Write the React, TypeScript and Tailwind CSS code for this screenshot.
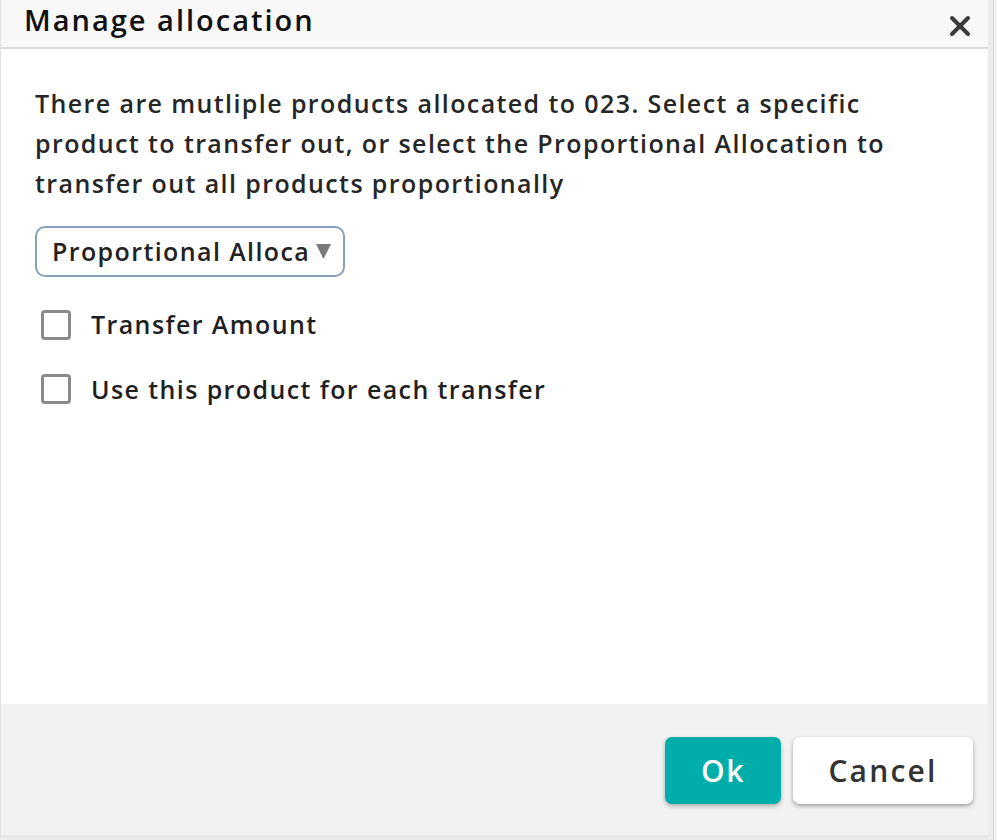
import React from "react";

export default function App() {
  const font = { fontFamily: '"Open Sans", "Noto Sans", sans-serif' };
  return (
    <div className="w-[997px] h-[840px] flex bg-[#ececec]" style={font}>
      <div className="w-[988px] h-[838px] flex flex-col border-l border-[#e2e2e2] bg-white">
        <div className="h-[49px] shrink-0 flex items-center justify-between bg-[#f8f8f8] border-b-2 border-[#dcdcdc] pl-[23px] pr-[16px]">
          <div className="text-[29px] font-semibold text-[#111] leading-none -mt-[8px] tracking-[2px]">Manage allocation</div>
          <svg width="24" height="24" viewBox="0 0 24 24" className="mt-[4px]">
            <path d="M4 4 L20 20 M20 4 L4 20" stroke="#3a3a3a" strokeWidth="4" strokeLinecap="round" />
          </svg>
        </div>
        <div className="flex-1 flex flex-col pl-[34px] pt-[34px]">
          <p className="text-[25px] font-[550] leading-[40px] text-[#262626] tracking-[1.4px] whitespace-nowrap">
            There are mutliple products allocated to 023. Select a specific
            <br />
            product to transfer out, or select the Proportional Allocation to
            <br />
            transfer out all products proportionally
          </p>
          <div className="mt-[23px] w-[310px] h-[51px] border-2 border-[#86a0b8] rounded-[10px] flex items-center pl-[15px] pr-[8px] overflow-hidden">
            <span className="text-[25px] font-[550] tracking-[1.4px] text-[#222] whitespace-nowrap overflow-hidden w-[257px] shrink-0">Proportional Allocation</span>
            <svg width="15" height="17" viewBox="0 0 15 17" className="ml-[7px] shrink-0">
              <polygon points="0,1 15,1 7.5,16" fill="#7a7a7a" />
            </svg>
          </div>
          <div className="mt-[29px] flex items-center gap-[20px] pl-[6px]">
            <div className="w-[30px] h-[30px] rounded-[4px] border-[3px] border-[#8a8a8a] bg-white" />
            <span className="text-[25px] font-[550] tracking-[1.4px] text-[#1f1f1f]">Transfer Amount</span>
          </div>
          <div className="mt-[27px] flex items-center gap-[20px] pl-[6px]">
            <div className="w-[30px] h-[30px] rounded-[4px] border-[3px] border-[#8a8a8a] bg-white" />
            <span className="text-[25px] font-[550] tracking-[1.4px] text-[#1f1f1f]">Use this product for each transfer</span>
          </div>
        </div>
        <div className="h-[134px] shrink-0 bg-[#f2f2f2] flex items-start justify-end gap-[12px] pt-[33px] pr-[15px] border-b-[3px] border-[#e6e6e6]">
          <button className="w-[116px] h-[67px] rounded-[7px] bg-[#00ada9] text-white text-[30px] font-semibold tracking-[1.5px] shadow-[0_2px_4px_rgba(0,0,0,0.3)]">Ok</button>
          <button className="w-[180px] h-[67px] rounded-[7px] bg-white text-[#333] text-[30px] font-[550] tracking-[2.2px] shadow-[0_2px_4px_rgba(0,0,0,0.35)]">Cancel</button>
        </div>
      </div>
      <div className="w-[9px] flex">
        <div className="w-[5px] bg-[#ececec]" />
        <div className="w-[1px] bg-[#d6d6d6]" />
        <div className="flex-1 bg-[#f4f4f4]" />
      </div>
    </div>
  );
}
